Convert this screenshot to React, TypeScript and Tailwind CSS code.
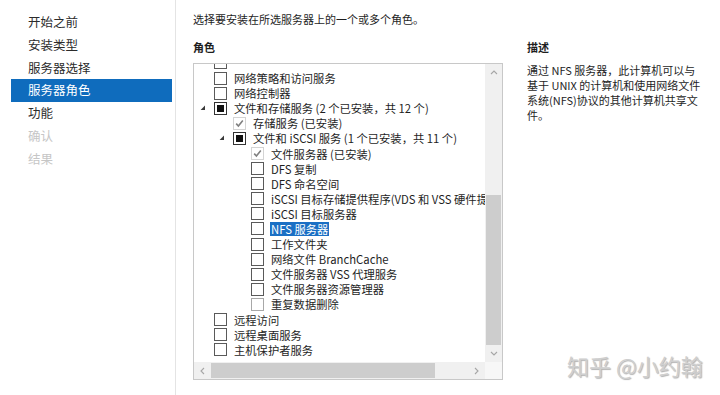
import React from "react";

type Cb = "empty" | "ind" | "checked" | "light";
type Row = { level: 0 | 1 | 2; cb: Cb; text: string; exp?: boolean; sel?: boolean };

const rows: Row[] = [
  { level: 0, cb: "empty", text: "" },
  { level: 0, cb: "empty", text: "网络策略和访问服务" },
  { level: 0, cb: "empty", text: "网络控制器" },
  { level: 0, cb: "ind", text: "文件和存储服务 (2 个已安装，共 12 个)", exp: true },
  { level: 1, cb: "checked", text: "存储服务 (已安装)" },
  { level: 1, cb: "ind", text: "文件和 iSCSI 服务 (1 个已安装，共 11 个)", exp: true },
  { level: 2, cb: "checked", text: "文件服务器 (已安装)" },
  { level: 2, cb: "empty", text: "DFS 复制" },
  { level: 2, cb: "empty", text: "DFS 命名空间" },
  { level: 2, cb: "empty", text: "iSCSI 目标存储提供程序(VDS 和 VSS 硬件提供程序)" },
  { level: 2, cb: "empty", text: "iSCSI 目标服务器" },
  { level: 2, cb: "empty", text: "NFS 服务器", sel: true },
  { level: 2, cb: "empty", text: "工作文件夹" },
  { level: 2, cb: "empty", text: "网络文件 BranchCache" },
  { level: 2, cb: "empty", text: "文件服务器 VSS 代理服务" },
  { level: 2, cb: "empty", text: "文件服务器资源管理器" },
  { level: 2, cb: "light", text: "重复数据删除" },
  { level: 0, cb: "empty", text: "远程访问" },
  { level: 0, cb: "empty", text: "远程桌面服务" },
  { level: 0, cb: "empty", text: "主机保护者服务" },
];

const levelPad = ["pl-[6px]", "pl-[25px]", "pl-[43px]"];

function Checkbox({ cb }: { cb: Cb }) {
  if (cb === "ind")
    return (
      <div className="w-[13px] h-[13px] border border-[#333] bg-white flex items-center justify-center shrink-0">
        <div className="w-[7px] h-[7px] bg-[#111]" />
      </div>
    );
  if (cb === "checked")
    return (
      <div className="w-[13px] h-[13px] border border-[#d4d4d4] bg-white flex items-center justify-center shrink-0">
        <svg width="9" height="9" viewBox="0 0 9 9">
          <polyline points="1.2,4.6 3.4,7 7.8,1.6" fill="none" stroke="#808080" strokeWidth="1.6" />
        </svg>
      </div>
    );
  if (cb === "light")
    return <div className="w-[13px] h-[13px] border border-[#a8a8a8] bg-white shrink-0" />;
  return <div className="w-[13px] h-[13px] border border-[#5a5a5a] bg-white shrink-0" />;
}

function Chevron({ dir }: { dir: "up" | "down" | "left" | "right" }) {
  const pts =
    dir === "up"
      ? "1,5 4,2 7,5"
      : dir === "down"
      ? "1,2 4,5 7,2"
      : dir === "left"
      ? "5,1 2,4 5,7"
      : "2,1 5,4 2,7";
  return (
    <svg width="8" height="8" viewBox="0 0 8 8">
      <polyline points={pts} fill="none" stroke="#a6a6a6" strokeWidth="1.1" />
    </svg>
  );
}

const nav = [
  { t: "开始之前", s: "n" },
  { t: "安装类型", s: "n" },
  { t: "服务器选择", s: "n" },
  { t: "服务器角色", s: "a" },
  { t: "功能", s: "n" },
  { t: "确认", s: "d" },
  { t: "结果", s: "d" },
];

export default function App() {
  return (
    <div className="relative w-[720px] h-[395px] bg-white flex overflow-hidden font-['Noto_Sans_CJK_SC','Noto_Sans',sans-serif]">
      <nav className="w-[176px] shrink-0 border-r border-[#e4e4e4] pt-[11px] pl-[11px] pr-[3px] text-[12.5px]">
        {nav.map((n) => (
          <div
            key={n.t}
            className={
              n.s === "a"
                ? "h-[22.8px] flex items-center pl-[17px] bg-[#0f6cbd] text-white"
                : n.s === "d"
                ? "h-[22.8px] flex items-center pl-[17px] text-[#c6c6c6]"
                : "h-[22.8px] flex items-center pl-[17px] text-[#2b2b2b]"
            }
          >
            {n.t}
          </div>
        ))}
      </nav>

      <main className="flex-1 pl-[17px] pt-[10px] text-[#1e1e1e]">
        <p className="h-[18px] leading-[18px] text-[11px] whitespace-nowrap">
          选择要安装在所选服务器上的一个或多个角色。
        </p>
        <div className="flex mt-[10px]">
          <div className="w-[310px] shrink-0">
            <div className="h-[18px] leading-[18px] text-[11px] font-bold">角色</div>
            <div className="mt-[7px] h-[317px] border border-[#c8c8c8] flex flex-col">
              <div className="flex-1 flex min-h-0">
                <div className="flex-1 overflow-hidden text-[11.3px] text-[#1e1e1e]">
                  <div className="mt-[-8.6px]">
                    {rows.map((r, i) => (
                      <div
                        key={i}
                        className={`h-[15.1px] flex items-center whitespace-nowrap ${levelPad[r.level]}`}
                      >
                        <div className="w-[6px] h-[6px] mr-[8px] shrink-0 flex items-end">
                          {r.exp && (
                            <svg width="6" height="6" viewBox="0 0 6 6">
                              <polygon points="5,0.6 5,5 0.6,5" fill="#3a3a3a" />
                            </svg>
                          )}
                        </div>
                        <Checkbox cb={r.cb} />
                        <span
                          className={
                            r.sel
                              ? "ml-[6px] px-[1px] leading-[14px] bg-[#1a6fc4] text-white"
                              : "ml-[7px] leading-[14px]"
                          }
                        >
                          {r.text}
                        </span>
                      </div>
                    ))}
                  </div>
                </div>
                <div className="w-[17px] shrink-0 bg-[#f0f0f0] flex flex-col">
                  <div className="h-[17px] flex items-center justify-center">
                    <Chevron dir="up" />
                  </div>
                  <div className="flex-1 flex flex-col">
                    <div className="h-[114px]" />
                    <div className="flex-1 mx-[1px] bg-[#cdcdcd]" />
                  </div>
                  <div className="h-[17px] flex items-center justify-center">
                    <Chevron dir="down" />
                  </div>
                </div>
              </div>
              <div className="h-[17px] shrink-0 flex">
                <div className="flex-1 flex bg-[#f0f0f0]">
                  <div className="w-[17px] flex items-center justify-center">
                    <Chevron dir="left" />
                  </div>
                  <div className="w-[224px] my-[1px] bg-[#cdcdcd]" />
                  <div className="flex-1" />
                  <div className="w-[17px] flex items-center justify-center">
                    <Chevron dir="right" />
                  </div>
                </div>
                <div className="w-[17px] bg-[#f7f7f7]" />
              </div>
            </div>
          </div>

          <div className="ml-[24px] w-[190px]">
            <div className="h-[18px] leading-[18px] text-[11px] font-bold">描述</div>
            <div className="mt-[6.5px] text-[11px] leading-[15px] text-[#1e1e1e] whitespace-nowrap">
              <div>通过 NFS 服务器，此计算机可以与</div>
              <div>基于 UNIX 的计算机和使用网络文件</div>
              <div>系统(NFS)协议的其他计算机共享文</div>
              <div>件。</div>
            </div>
          </div>
        </div>
      </main>

      <div className="absolute left-[567px] top-[351px] text-[22px] leading-[28px] text-[#cfcfcf] whitespace-nowrap [text-shadow:1px_1px_1px_rgba(0,0,0,0.3)]">
        知乎 @小约翰
      </div>
    </div>
  );
}
